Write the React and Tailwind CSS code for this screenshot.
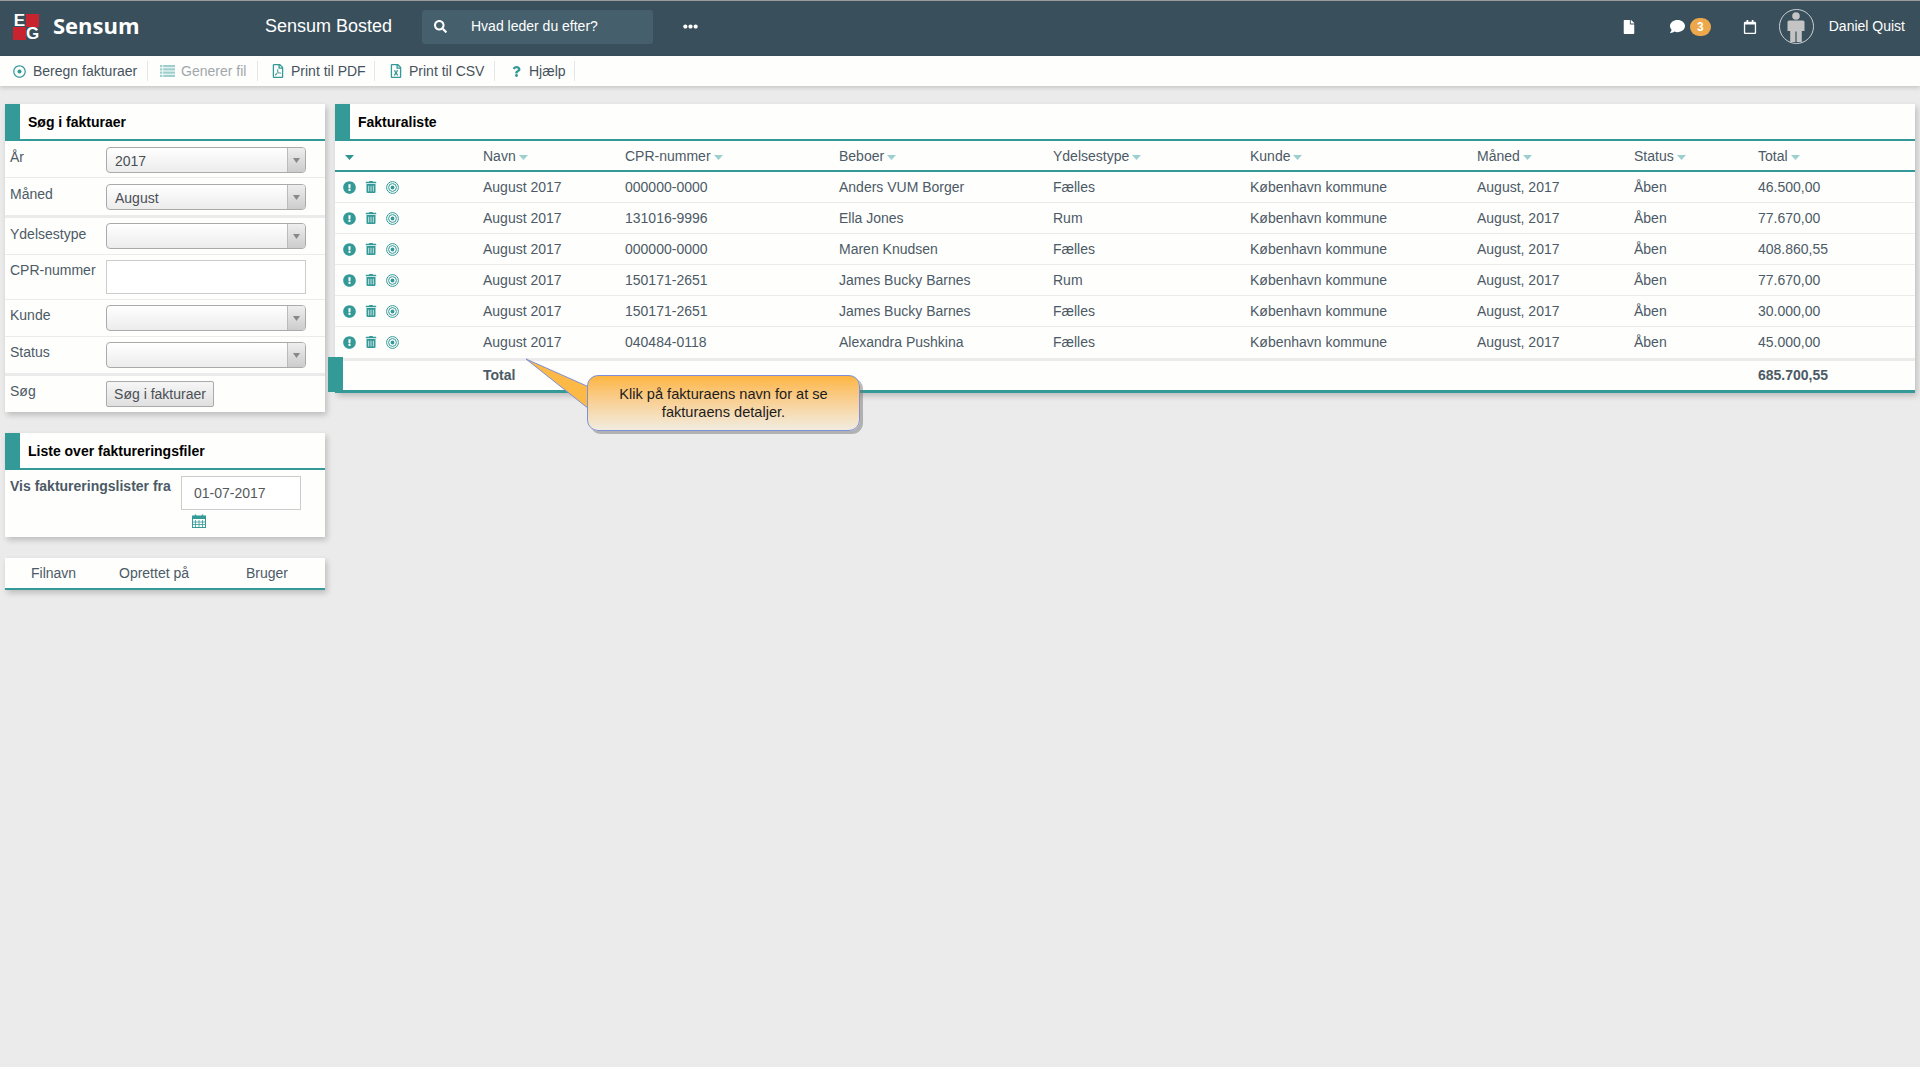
import React from "react";
import { FaSearch, FaEllipsisH, FaFile, FaComment, FaRegCalendar, FaRegDotCircle, FaRegFilePdf, FaRegFileExcel, FaQuestion, FaExclamationCircle, FaTrashAlt } from "react-icons/fa";

const rows = [
  ["000000-0000", "Anders VUM Borger", "Fælles", "46.500,00"],
  ["131016-9996", "Ella Jones", "Rum", "77.670,00"],
  ["000000-0000", "Maren Knudsen", "Fælles", "408.860,55"],
  ["150171-2651", "James Bucky Barnes", "Rum", "77.670,00"],
  ["150171-2651", "James Bucky Barnes", "Fælles", "30.000,00"],
  ["040484-0118", "Alexandra Pushkina", "Fælles", "45.000,00"],
];
const GRID = "grid grid-cols-[148px_142px_214px_214px_197px_227px_157px_124px_1fr]";

function Caret({ dark }) {
  return (
    <svg width="9" height="5" viewBox="0 0 9 5" className="ml-[3px] mt-[1px] inline-block align-middle">
      <polygon points="0,0 9,0 4.5,5" fill={dark ? "#2f9694" : "#9ccfcd"} />
    </svg>
  );
}

function Target() {
  return (
    <svg width="13" height="13" viewBox="0 0 13 13">
      <circle cx="6.5" cy="6.5" r="5.9" fill="none" stroke="#339a98" strokeWidth="1" />
      <circle cx="6.5" cy="6.5" r="3.9" fill="none" stroke="#339a98" strokeWidth="1" />
      <circle cx="6.5" cy="6.5" r="1.9" fill="#339a98" />
    </svg>
  );
}

function ListIcon() {
  return (
    <svg width="15" height="12" viewBox="0 0 15 12">
      <path d="M0 1.2h2.4M3.2 1.2H15M0 4.4h2.4M3.2 4.4H15M0 7.6h2.4M3.2 7.6H15M0 10.8h2.4M3.2 10.8H15" stroke="#9ccfcd" strokeWidth="2.2" />
    </svg>
  );
}

function CalGrid() {
  return (
    <svg width="14" height="14" viewBox="0 0 14 14" className="ml-[11px] mt-[4px]">
      <rect x="0.5" y="2" width="13" height="11.5" fill="none" stroke="#339a98" />
      <rect x="0.5" y="2" width="13" height="3" fill="#339a98" />
      <path d="M3.5 6v7M7 6v7M10.5 6v7M1 8h12M1 10.5h12" stroke="#339a98" strokeWidth="0.8" />
      <path d="M3.5 0.5v2.5M10.5 0.5v2.5" stroke="#339a98" strokeWidth="1.4" />
    </svg>
  );
}

function Logo() {
  return (
    <div className="grid grid-cols-[13px_13px] grid-rows-[13px_13px] w-[26px] h-[26px] font-['Liberation_Sans',sans-serif] font-bold text-white text-[17px] leading-[13px] text-center">
      <div>E</div>
      <div className="bg-[#c8242f]" />
      <div className="bg-[#c8242f]" />
      <div>G</div>
    </div>
  );
}

function Avatar() {
  return (
    <div className="w-[35px] h-[35px] rounded-full border border-[#c9d0d4] flex items-center justify-center">
      <svg width="18" height="30" viewBox="0 0 18 30">
        <circle cx="9" cy="4" r="3.8" fill="#c4c4c4" />
        <path d="M2 8.5h14a1.5 1.5 0 0 1 1.5 1.5v9h-2.7v11H9.6V19.5H8.4V30H3.2V19H.5v-9A1.5 1.5 0 0 1 2 8.5z" fill="#c4c4c4" />
      </svg>
    </div>
  );
}

function ToolItem({ w, pl, gap, icon, children, muted }) {
  return (
    <div className={`${w} ${pl} h-[20px] flex items-center border-r border-[#e6e6e6] ${muted ? "text-[#a2a7ac]" : "text-[#46525e]"}`}>
      <span className={`flex ${gap} shrink-0`}>{icon}</span>
      <span className="whitespace-nowrap">{children}</span>
    </div>
  );
}

function PanelHead({ title }) {
  return (
    <div className="flex h-[37px] border-b-2 border-[#339a98]">
      <div className="w-[15px] bg-[#339a98]" />
      <div className="pl-[8px] leading-[37px] font-bold text-black">{title}</div>
    </div>
  );
}

function Sel({ value }) {
  return (
    <div className="w-[200px] h-[26px] rounded-[4px] border border-[#aaaaaa] bg-gradient-to-b from-white to-[#ececec] flex overflow-hidden">
      <div className="flex-1 pl-[8px] leading-[27px] text-[#4a4f55]">{value}</div>
      <div className="w-[18px] border-l border-[#bbbbbb] bg-gradient-to-b from-[#eeeeee] to-[#cccccc] flex items-center justify-center">
        <svg width="7" height="5" viewBox="0 0 7 5"><polygon points="0,0 7,0 3.5,5" fill="#888888" /></svg>
      </div>
    </div>
  );
}

function FormRow({ label, h, pt, lab, line, children }) {
  return (
    <div className={`flex ${h} ${pt} pl-[5px] ${line ? "border-b border-[#ebebe9]" : ""}`}>
      <div className={`w-[96px] leading-[20px] text-[#4c5a67] ${lab || ""}`}>{label}</div>
      {children}
    </div>
  );
}

export default function App() {
  return (
    <div className="min-h-[1067px] bg-[#ebebeb] text-[14px] font-['Liberation_Sans',Arial,sans-serif] text-[#4c5a67] border-t border-[#9a9a9a]">
      <header className="h-[55px] pb-[4px] bg-[#394f5b] flex items-center text-white">
        <div className="ml-[13px]"><Logo /></div>
        <div className="ml-[14px] mb-[3px] w-[212px] font-['Open_Sans',sans-serif] font-bold text-[22px] leading-[26px] whitespace-nowrap">Sensum</div>
        <div className="text-[18px] w-[157px] whitespace-nowrap">Sensum Bosted</div>
        <div className="w-[231px] h-[34px] rounded-[3px] bg-[#45606c] flex items-center">
          <FaSearch className="ml-[12px] text-[13px]" />
          <span className="ml-[24px]">Hvad leder du efter?</span>
        </div>
        <FaEllipsisH className="ml-[30px] text-[15px]" />
        <div className="ml-auto flex items-center pr-[15px]">
          <FaFile className="text-[14px]" />
          <FaComment className="ml-[34px] text-[15px]" />
          <span className="ml-[5px] w-[21px] h-[18px] rounded-full bg-[#eca84a] text-[12px] font-bold leading-[18px] text-center">3</span>
          <FaRegCalendar className="ml-[32px] text-[14px]" />
          <div className="ml-[22px]"><Avatar /></div>
          <span className="ml-[15px] whitespace-nowrap">Daniel Quist</span>
        </div>
      </header>

      <nav className="h-[30px] bg-[#fefefc] flex items-center shadow-[0_2px_4px_rgba(0,0,0,0.15)]">
        <ToolItem w="w-[148px]" pl="pl-[13px]" gap="w-[20px]" icon={<FaRegDotCircle className="text-[13px] text-[#339a98]" />}>Beregn fakturaer</ToolItem>
        <ToolItem muted w="w-[110px]" pl="pl-[12px]" gap="w-[21px]" icon={<ListIcon />}>Generer fil</ToolItem>
        <ToolItem w="w-[117px]" pl="pl-[13px]" gap="w-[20px]" icon={<FaRegFilePdf className="text-[14px] text-[#339a98]" />}>Print til PDF</ToolItem>
        <ToolItem w="w-[120px]" pl="pl-[14px]" gap="w-[20px]" icon={<FaRegFileExcel className="text-[14px] text-[#339a98]" />}>Print til CSV</ToolItem>
        <ToolItem w="w-[80px]" pl="pl-[16px]" gap="w-[18px]" icon={<FaQuestion className="text-[11px] text-[#339a98]" />}>Hjælp</ToolItem>
      </nav>

      <main className="flex pt-[18px] pl-[5px] pr-[5px] gap-[10px] items-start">
        <div className="w-[320px] shrink-0 flex flex-col gap-[21px]">
          <section className="bg-[#fefefc] shadow-[2px_3px_6px_rgba(0,0,0,0.2)]">
            <PanelHead title="Søg i fakturaer" />
            <FormRow label="År" h="h-[37px]" pt="pt-[6px]" line><Sel value="2017" /></FormRow>
            <FormRow label="Måned" h="h-[37px]" pt="pt-[6px]"><Sel value="August" /></FormRow>
            <div className="h-[3px] bg-[#ebebeb]" />
            <FormRow label="Ydelsestype" h="h-[37px]" pt="pt-[5px]" lab="mt-[1px]" line><Sel /></FormRow>
            <FormRow label="CPR-nummer" h="h-[45px]" pt="pt-[5px]" line>
              <div className="w-[200px] h-[34px] border border-[#cccccc] bg-white" />
            </FormRow>
            <FormRow label="Kunde" h="h-[37px]" pt="pt-[5px]" line><Sel /></FormRow>
            <FormRow label="Status" h="h-[36px]" pt="pt-[5px]"><Sel /></FormRow>
            <div className="h-[3px] bg-[#ebebeb]" />
            <FormRow label="Søg" h="h-[36px]" pt="pt-[5px]">
              <div className="w-[108px] h-[26px] border border-[#aaaaaa] rounded-[2px] bg-gradient-to-b from-[#f6f6f6] to-[#e0e0e0] text-center leading-[24px] text-[#4a4f55]">Søg i fakturaer</div>
            </FormRow>
          </section>

          <section className="bg-[#fefefc] h-[104px] shadow-[2px_3px_6px_rgba(0,0,0,0.2)]">
            <PanelHead title="Liste over faktureringsfiler" />
            <div className="flex pl-[5px] pt-[6px]">
              <div className="w-[171px] font-bold leading-[20px] whitespace-nowrap">Vis faktureringslister fra</div>
              <div>
                <div className="w-[120px] h-[34px] border border-[#cccccc] bg-white pl-[12px] leading-[32px] text-[#55595c]">01-07-2017</div>
                <CalGrid />
              </div>
            </div>
          </section>

          <section className="bg-[#fefefc] h-[32px] border-b-2 border-[#339a98] flex leading-[30px] shadow-[2px_3px_6px_rgba(0,0,0,0.2)]">
            <div className="w-[114px] pl-[26px]">Filnavn</div>
            <div className="w-[127px]">Oprettet på</div>
            <div>Bruger</div>
          </section>
        </div>

        <section className="relative flex-1 bg-[#fefefc] shadow-[2px_3px_6px_rgba(0,0,0,0.2)]">
          <PanelHead title="Fakturaliste" />
          <div className={`${GRID} h-[31px] border-b-2 border-[#339a98] leading-[31px]`}>
            <div className="pl-[7px]"><Caret dark /></div>
            {["Navn", "CPR-nummer", "Beboer", "Ydelsestype", "Kunde", "Måned", "Status", "Total"].map((h) => (
              <div key={h}>{h}<Caret /></div>
            ))}
          </div>
          {rows.map((r, i) => (
            <div key={i} className={`${GRID} h-[31px] leading-[31px] ${i < 5 ? "border-b border-[#ebebe9]" : ""}`}>
              <div className="flex items-center pl-[8px] pb-[1px] text-[#339a98]">
                <FaExclamationCircle className="text-[13px]" />
                <FaTrashAlt className="ml-[9px] text-[12px]" />
                <span className="ml-[9px] flex"><Target /></span>
              </div>
              <div>August 2017</div>
              <div>{r[0]}</div>
              <div>{r[1]}</div>
              <div>{r[2]}</div>
              <div>København kommune</div>
              <div>August, 2017</div>
              <div>Åben</div>
              <div>{r[3]}</div>
            </div>
          ))}
          <div className="h-[3px] bg-[#ebebeb]" />
          <div className={`${GRID} h-[32px] border-b-[3px] border-[#339a98] font-bold leading-[29px]`}>
            <div />
            <div>Total</div>
            <div /><div /><div /><div /><div /><div />
            <div>685.700,55</div>
          </div>

          <div className="absolute left-[-7px] top-[253px] w-[15px] h-[35px] bg-[#339a98]" />

          <svg className="absolute left-[190px] top-[255px] overflow-visible" width="75" height="60" viewBox="0 0 75 60">
            <polygon points="1,0 64,28 64,50" fill="#fcb945" stroke="#7d90d8" strokeWidth="1" strokeLinejoin="round" />
          </svg>
          <div className="absolute left-[252px] top-[271px] w-[273px] h-[56px] rounded-[11px] border border-[#7d90d8] bg-gradient-to-b from-[#fdb53c] to-[#f1ece0] shadow-[3px_3px_0_rgba(120,120,120,0.5)] flex items-center justify-center text-center text-[#1c1c1c] text-[14.6px] leading-[18px] px-[20px]">
            Klik på fakturaens navn for at se fakturaens detaljer.
          </div>
        </section>
      </main>
    </div>
  );
}
